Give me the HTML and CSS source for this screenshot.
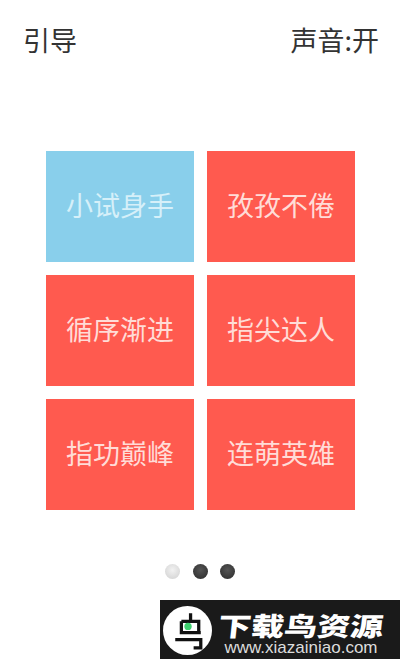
FILE: index.html
```html
<!DOCTYPE html>
<html lang="zh-CN">
  <head>
    <meta charset="UTF-8" />
    <title>引导</title>
    <link rel="stylesheet" href="styles.css">
  </head>
  <body>
    <div class="header">
      <span>引导</span>
      <span>声音:开</span>
    </div>
    <div class="grid">
      <div class="tile tile-blue">小试身手</div>
      <div class="tile">孜孜不倦</div>
      <div class="tile">循序渐进</div>
      <div class="tile">指尖达人</div>
      <div class="tile">指功巅峰</div>
      <div class="tile">连萌英雄</div>
    </div>
    <div class="dots">
      <span class="dot dot-on"></span>
      <span class="dot"></span>
      <span class="dot"></span>
    </div>
    <div class="banner">
      <svg class="logo" width="49" height="49" viewBox="0 0 48 48">
        <circle cx="24" cy="24" r="24" fill="#fff" />
        <path d="M27 7v8M18 15h17v11M18 15v11h19M12 33h25v8h-7" fill="none" stroke="#111" stroke-width="3.2" />
        <circle cx="24.5" cy="20" r="3.6" fill="#3ecf6e" />
      </svg>
      <div class="banner-text">
        <div class="banner-title">下载鸟资源</div>
        <div class="banner-url">www.xiazainiao.com</div>
      </div>
    </div>
  </body>
</html>
```

FILE: styles.css
```css
html,
body {
  height: 100%;
}
body {
  margin: 0;
  display: flex;
  flex-direction: column;
  background: #fff;
  font-family: "Noto Sans CJK SC", "Liberation Sans", sans-serif;
  overflow: hidden;
}
.header {
  display: flex;
  justify-content: space-between;
  padding: 20px 21px 0 23px;
  height: 132px;
  box-sizing: border-box;
  font-size: 27px;
  line-height: 40px;
  color: #333;
}
.grid {
  display: grid;
  grid-template-columns: 148px 148px;
  grid-auto-rows: 111px;
  gap: 13px;
  margin: 19px 0 0 46px;
}
.tile {
  display: flex;
  align-items: center;
  justify-content: center;
  padding-bottom: 5px;
  box-sizing: border-box;
  background: #ff5a4f;
  color: #ffdcd7;
  font-size: 27px;
}
.tile-blue {
  background: #89cfeb;
  color: #d6f0f9;
}
.dots {
  display: flex;
  gap: 12.5px;
  margin: 54px 0 0 165px;
}
.dot {
  width: 15px;
  height: 15px;
  border-radius: 50%;
  background: radial-gradient(circle at 50% 40%, #555, #2a2a2a);
}
.dot-on {
  background: radial-gradient(circle at 50% 40%, #f2f2f2, #cfcfcf);
}
.banner {
  display: flex;
  gap: 5px;
  margin: 21px 0 0 160px;
  width: 240px;
  height: 59px;
  padding: 6px 0 0 3px;
  box-sizing: border-box;
  background: #1a1a1a;
  color: #fff;
}
.banner-text {
  display: flex;
  flex-direction: column;
  align-items: center;
  width: 168px;
  padding-top: 5px;
}
.banner-title {
  font-size: 26px;
  line-height: 28px;
  font-weight: 900;
  white-space: nowrap;
  transform: scaleX(1.27) skewX(-5deg);
}
.banner-url {
  font-family: "Liberation Sans", sans-serif;
  font-size: 17px;
  line-height: 18px;
  color: #ddd;
}
```
